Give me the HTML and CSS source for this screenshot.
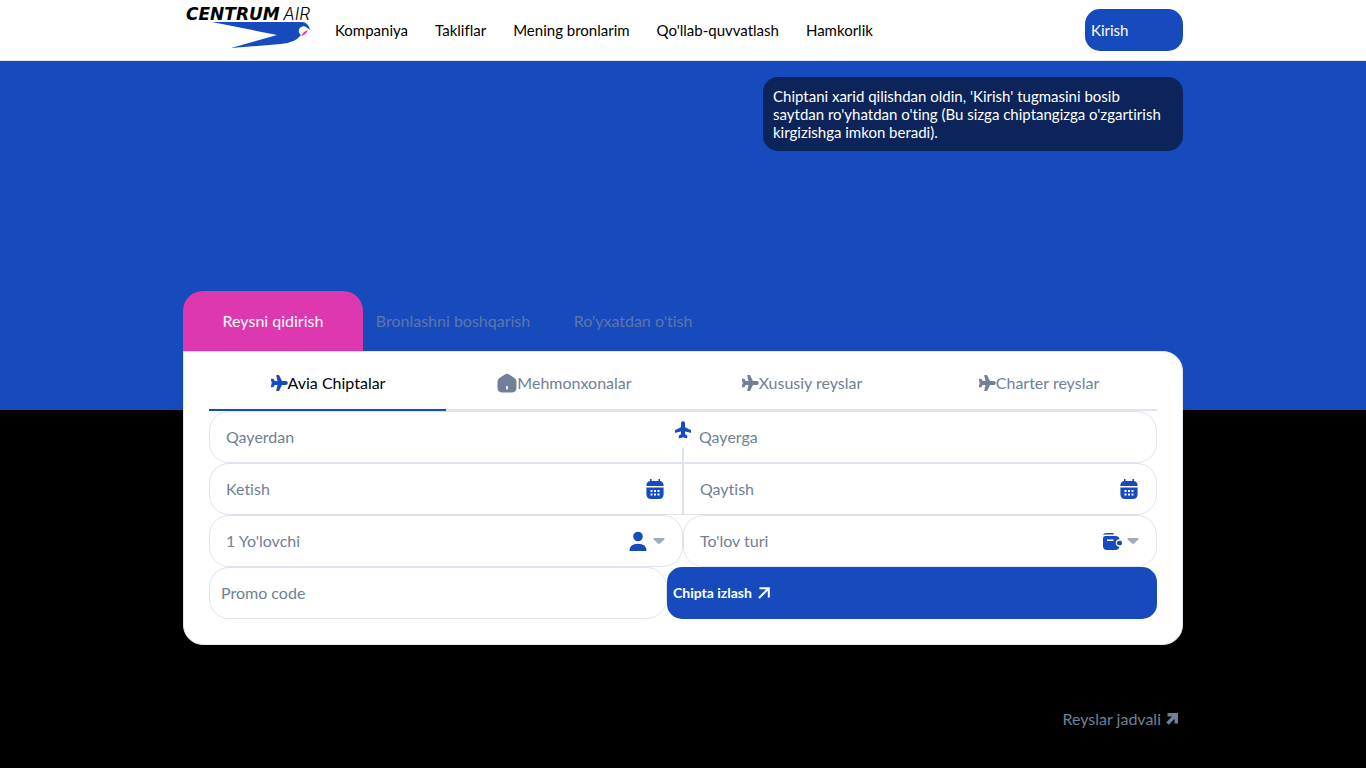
FILE: index.html
```html
<!DOCTYPE html>
<html lang="uz">
<head>
<meta charset="utf-8">
<meta name="viewport" content="width=device-width, initial-scale=1">
<title>Centrum Air</title>
<link rel="stylesheet" href="styles.css">
</head>
<body>
<svg class="sprite" aria-hidden="true">
  <symbol id="plane" viewBox="0 0 24 24"><path d="M23 12c0-1.200-1-2-2.300-2H15.500L11.500 2H9l2 8H6L4 7H1.800L3 12l-1.200 5H4l2-3h5l-2 8h2.500l4-8h5.200C22 14 23 13.200 23 12z" fill="currentColor" stroke="currentColor" stroke-width="1.400" stroke-linejoin="round"/></symbol>
  <symbol id="home" viewBox="0 0 20 20"><path fill-rule="evenodd" d="M8.300 1.300Q10 .1 11.700 1.300L17.500 5Q19.500 6.300 19.500 8.500V14.500Q19.500 19.500 14.500 19.500H5.500Q.5 19.500 .5 14.500V8.500Q.5 6.300 2.500 5zM9.200 13V16.500H10.900V13z" fill="currentColor"/></symbol>
  <symbol id="calendar" viewBox="0 0 20 20"><path fill-rule="evenodd" d="M5 0H6.500V2H13.500V0H15V2Q18.600 2.500 18.600 6.500V7H1.400V6.500Q1.400 2.500 5 2zM1.400 8.500H18.600V15Q18.600 20 14 20H6Q1.400 20 1.400 15zM5.500 11V13H7.500V11zM9 11V13H11V11zM12.500 11V13H14.500V11zM5.500 14.500V16.500H7.500V14.500zM9 14.500V16.500H11V14.500zM12.500 14.500V16.500H14.500V14.500z" fill="currentColor"/></symbol>
  <symbol id="person" viewBox="0 0 20 20"><circle cx="10" cy="5.500" r="4.800" fill="currentColor"/><path d="M1.500 20Q1.500 12.800 10 12.800T18.500 20z" fill="currentColor"/></symbol>
  <symbol id="wallet" viewBox="0 0 20 20"><path d="M1 4Q1.500 2 4.500 2H10.500Q12 2 12 3.400L3.500 3.600z" fill="currentColor"/><path fill-rule="evenodd" d="M1 7.500Q1 5 3.500 5H13.500Q17 5 17.500 8.300A3.700 3.700 0 0 0 17.500 15.700Q16.500 19 13.500 19H5Q1 19 1 15zM5 8.600V10H11.500V8.600z" fill="currentColor"/><path d="M17 9.700H18.500Q20 9.700 20 12T18.500 14.300H17.200A2.300 2.300 0 0 1 17 9.700z" fill="currentColor"/></symbol>
  <symbol id="caret" viewBox="0 0 12 6"><path d="M1 0H11Q12 .6 11.300 1.500L7 5.500Q6 6.300 5 5.500L.7 1.500Q0 .6 1 0z" fill="currentColor"/></symbol>
  <symbol id="arrow" viewBox="0 0 12 12"><path d="M1 11L10.500 1.500M1.500 1.200H10.800V10.500" fill="none" stroke="currentColor" stroke-width="2"/></symbol>
  <symbol id="arrow-bold" viewBox="0 0 12 12"><path d="M1.500 10.500L9.500 2.500M1.500 1.700H10.300V10.500" fill="none" stroke="currentColor" stroke-width="3.400"/></symbol>
</svg>

<header class="header">
  <div class="container header-row">
    <a class="logo" href="#" aria-label="Centrum Air">
      <svg width="128" height="48" viewBox="0 0 128 48">
        <text class="logo-bold" x="3" y="18">CENTRUM</text>
        <text class="logo-light" x="127" y="18" text-anchor="end">AIR</text>
        <path d="M29 20H119Q125 20 127 28L123 25A4 4 0 0 0 118 33Q112 41 98 42L48 46 94 33z" fill="#174bbd"/>
        <path d="M118 34Q123 33 125 28L121 30z" fill="#e036b1"/>
      </svg>
    </a>
    <nav class="nav">
      <a href="#">Kompaniya</a>
      <a href="#">Takliflar</a>
      <a href="#">Mening bronlarim</a>
      <a href="#">Qo'llab-quvvatlash</a>
      <a href="#">Hamkorlik</a>
    </nav>
    <button class="login" type="button">Kirish</button>
  </div>
</header>

<main class="hero">
  <div class="container">
    <div class="notice-area">
      <p class="notice">Chiptani xarid qilishdan oldin, 'Kirish' tugmasini bosib saytdan ro'yhatdan o'ting (Bu sizga chiptangizga o'zgartirish kirgizishga imkon beradi).</p>
    </div>

    <div class="tabs">
      <button class="tab tab-active" type="button">Reysni qidirish</button>
      <button class="tab" type="button">Bronlashni boshqarish</button>
      <button class="tab" type="button">Ro'yxatdan o'tish</button>
    </div>

    <form class="card">
      <div class="services">
        <button class="service service-active" type="button"><svg class="icon-plane"><use href="#plane"/></svg>Avia Chiptalar</button>
        <button class="service" type="button"><svg class="icon"><use href="#home"/></svg>Mehmonxonalar</button>
        <button class="service" type="button"><svg class="icon-plane"><use href="#plane"/></svg>Xususiy reyslar</button>
        <button class="service" type="button"><svg class="icon-plane"><use href="#plane"/></svg>Charter reyslar</button>
      </div>

      <div class="row box route">
        <label class="field"><input type="text" placeholder="Qayerdan" aria-label="Qayerdan"></label>
        <label class="field"><input type="text" placeholder="Qayerga" aria-label="Qayerga"></label>
        <button class="swap" type="button" aria-label="Almashtirish"><svg class="icon-plane icon-up"><use href="#plane"/></svg></button>
      </div>
      <div class="row box dates">
        <label class="field"><input type="text" placeholder="Ketish" aria-label="Ketish"><svg class="icon"><use href="#calendar"/></svg></label>
        <label class="field"><input type="text" placeholder="Qaytish" aria-label="Qaytish"><svg class="icon"><use href="#calendar"/></svg></label>
      </div>
      <div class="row">
        <label class="field box"><select aria-label="Yo'lovchilar"><option>1 Yo'lovchi</option></select><svg class="icon"><use href="#person"/></svg><svg class="caret"><use href="#caret"/></svg></label>
        <label class="field box"><select aria-label="To'lov turi"><option>To'lov turi</option></select><svg class="icon"><use href="#wallet"/></svg><svg class="caret"><use href="#caret"/></svg></label>
      </div>
      <div class="row submit-row">
        <label class="field box promo"><input type="text" placeholder="Promo code" aria-label="Promo code"></label>
        <button class="search" type="submit">Chipta izlash<svg class="arrow"><use href="#arrow"/></svg></button>
      </div>
    </form>

    <div class="footer-link">
      <a href="#">Reyslar jadvali<svg class="arrow"><use href="#arrow-bold"/></svg></a>
    </div>
  </div>
</main>
</body>
</html>
```
FILE: styles.css
```css
* {
  box-sizing: border-box;
}

body {
  margin: 0;
  background: #000;
  color: #000;
  font: 15px/18px Lato, sans-serif;
  font-variant-ligatures: none;
}

button,
input,
select {
  font: inherit;
  font-variant-ligatures: inherit;
  color: inherit;
  background: none;
  border: 0;
  padding: 0;
  margin: 0;
}

button {
  cursor: pointer;
}

a {
  color: inherit;
  text-decoration: none;
}

svg {
  flex: none;
}

.sprite {
  position: absolute;
  width: 0;
  height: 0;
}

.container {
  max-width: 1000px;
  margin: 0 auto;
}

.header {
  background: #fff;
  border-bottom: 1px solid #e2e8f0;
}

.header-row {
  display: flex;
  align-items: center;
  height: 60px;
}

.logo {
  display: flex;
  margin: 0 24px 8px 0;
}

.logo-bold {
  font: italic bold 17px "DejaVu Sans", sans-serif;
}

.logo-light {
  font: italic 300 17px Inter, sans-serif;
}

.nav {
  display: flex;
  flex: 1;
  gap: 27px;
}

.login {
  width: 98px;
  height: 42px;
  padding: 0 6px;
  border-radius: 15px;
  background: #174bbd;
  color: #fff;
  text-align: left;
}

.hero {
  background: linear-gradient(#174bbd 349px, #000 349px);
}

.notice-area {
  display: flex;
  justify-content: flex-end;
  align-items: flex-start;
  min-height: 230px;
  padding-top: 16px;
}

.notice {
  width: 420px;
  margin: 0;
  padding: 10px;
  border-radius: 15px;
  background: #0c245a;
  color: #fff;
}

.tabs {
  display: flex;
  font-size: 16px;
}

.tab {
  height: 60px;
  min-width: 180px;
  color: #5f76a8;
}

.tab-active {
  border-radius: 20px 20px 0 0;
  background: #dd38b0;
  color: #fff;
}

.card {
  padding: 5px 25px 25px;
  border: 1px solid #e2e8f0;
  border-radius: 0 20px 20px 20px;
  background: #fff;
  color: #718096;
  font-size: 16px;
}

.services {
  display: grid;
  grid-template-columns: repeat(4, 1fr);
}

.service {
  display: flex;
  align-items: center;
  justify-content: center;
  height: 54px;
  border-bottom: 2px solid #e0e3f3;
}

.service-active {
  border-color: #174bbd;
  color: #000;
}

.service-active .icon-plane {
  color: #174bbd;
}

.icon {
  width: 20px;
  height: 20px;
}

.icon-plane {
  width: 18px;
  height: 18px;
}

.icon-up {
  transform: rotate(-90deg);
}

.row {
  display: flex;
  height: 52px;
}

.box {
  border: 1px solid #dfe3f0;
  border-radius: 20px;
}

.field {
  display: flex;
  flex: 1;
  align-items: center;
  gap: 5px;
  min-width: 0;
  padding: 0 17px 0 16px;
}

.field .icon {
  color: #174bbd;
}

.field input,
.field select {
  flex: 1;
  min-width: 0;
  appearance: none;
  outline: 0;
}

.field input::placeholder {
  color: #718096;
  opacity: 1;
}

.caret {
  width: 12px;
  height: 6px;
  color: #a0aabb;
}

.route {
  position: relative;
}

.swap {
  position: absolute;
  top: 0;
  left: 50%;
  display: flex;
  align-items: center;
  justify-content: center;
  width: 36px;
  height: 36px;
  margin-left: -18px;
  color: #174bbd;
}

.route::after {
  content: "";
  position: absolute;
  bottom: 0;
  left: 50%;
  width: 2px;
  height: 14px;
  margin-left: -1px;
  background: #dfe3f0;
}

.dates .field + .field {
  border-left: 1px solid #dfe3f0;
}

.dates .field:first-child {
  border-right: 1px solid #dfe3f0;
}

.submit-row {
  display: grid;
  grid-template-columns: 458fr 490fr;
}

.promo {
  padding: 0 11px;
}

.search {
  display: flex;
  align-items: center;
  gap: 6px;
  padding: 0 6px;
  border-radius: 15px;
  background: #174bbd;
  color: #fff;
  font-size: 14px;
  font-weight: bold;
}

.arrow {
  width: 12px;
  height: 12px;
}

.footer-link {
  display: flex;
  justify-content: flex-end;
  padding: 65px 5px 40px;
  color: #718096;
  font-size: 16px;
}

.footer-link a {
  display: flex;
  align-items: center;
  gap: 5px;
}
```
